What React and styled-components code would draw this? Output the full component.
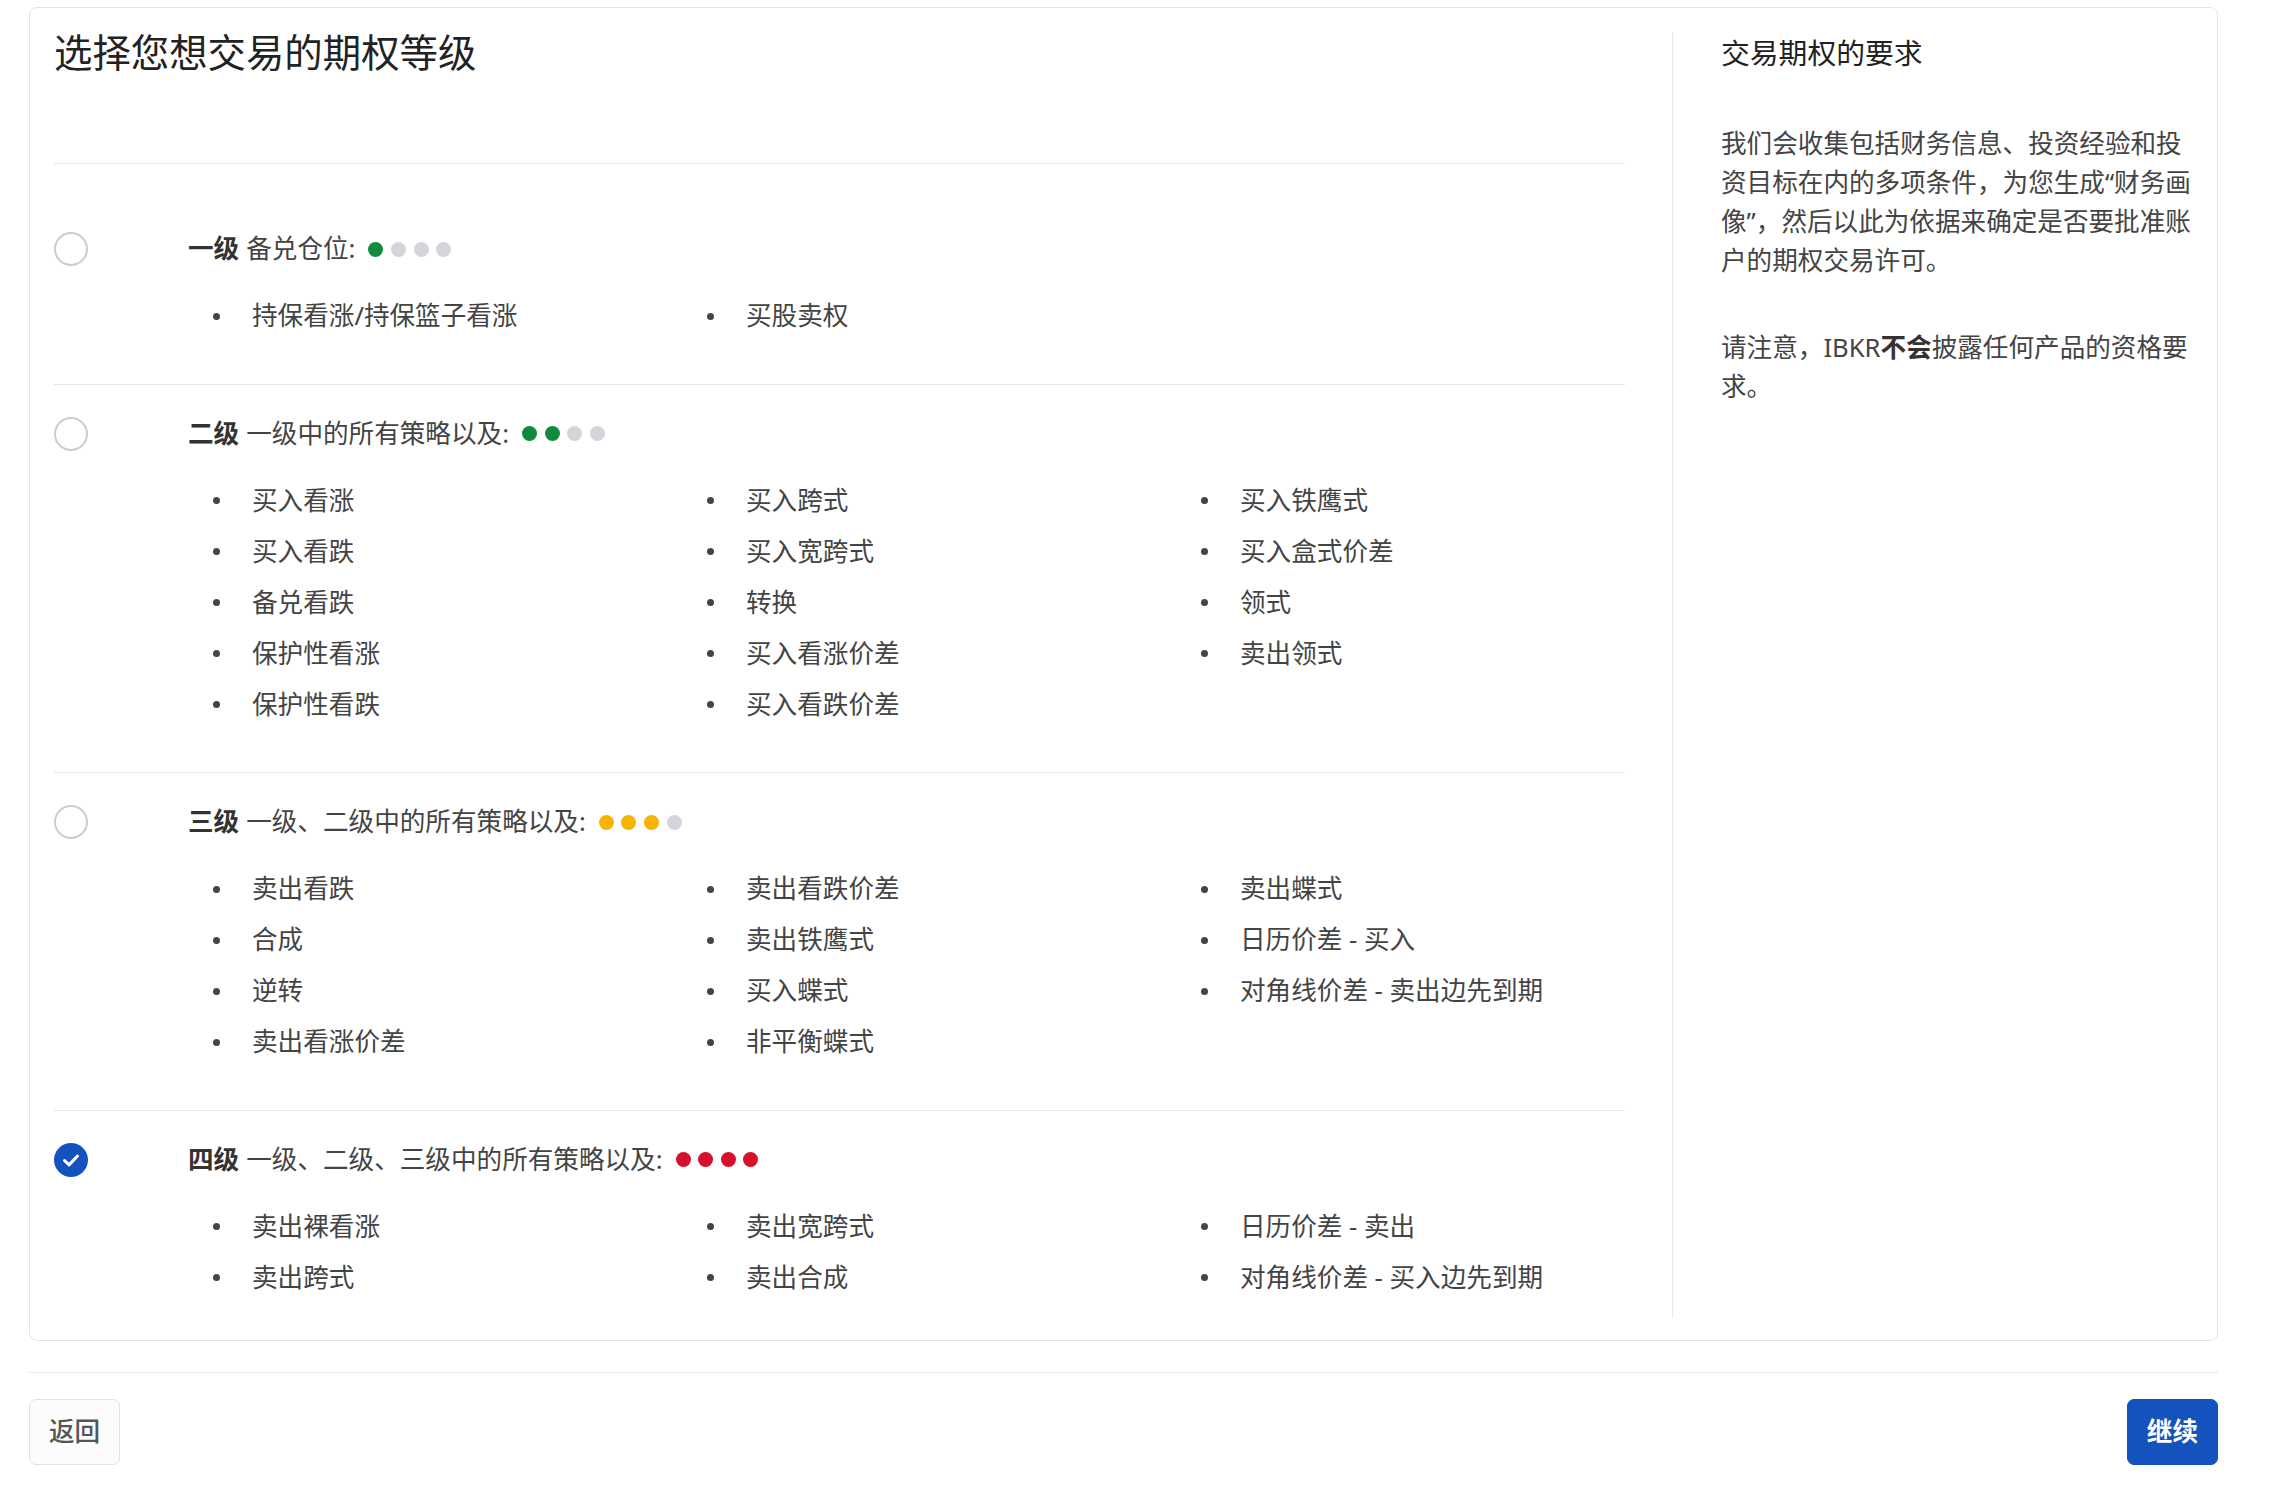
import styled, { createGlobalStyle } from "styled-components";

const GlobalStyle = createGlobalStyle`
  * { box-sizing: border-box; }
  body {
    margin: 0;
    background: #fff;
    font-family: "Noto Sans", "Noto Sans CJK SC", sans-serif;
    color: #333;
  }
`;

const Page = styled.div`
  padding: 7px 52px 0 29px;
`;

const Card = styled.div`
  border: 1px solid #e4e4e4;
  border-radius: 8px;
  padding: 24px 24px 22px 24px;
  display: grid;
  grid-template-columns: 1619px 1fr;
`;

const LeftCol = styled.div`
  padding-right: 47px;
  border-right: 1px solid #e8e8e8;
`;

const TitleBlock = styled.div`
  padding-bottom: 91px;
  border-bottom: 1px solid #e6e6e6;
`;

const Title = styled.h1`
  margin: 0;
  font-size: 38.4px;
  line-height: 40px;
  font-weight: 400;
  color: #222;
`;

const Levels = styled.div`
  padding-top: 36px;
`;

const Level = styled.div`
  display: grid;
  grid-template-columns: 134px 1fr;
  padding: 30px 0 ${(p) => (p.$last ? "8px" : "35.5px")};
  border-bottom: ${(p) => (p.$last ? "none" : "1px solid #e6e6e6")};
`;

const Radio = styled.span`
  width: 34px;
  height: 34px;
  margin-top: 2px;
  border-radius: 50%;
  border: ${(p) => (p.$checked ? "none" : "2px solid #cdcdcd")};
  background: ${(p) => (p.$checked ? "#1452bd" : "#fff")};
  display: flex;
  align-items: center;
  justify-content: center;
`;

const LevelHead = styled.div`
  display: flex;
  align-items: center;
  font-size: 25.6px;
  line-height: 38.4px;
  color: #444;

  & b {
    color: #333;
    font-weight: 700;
    margin-right: 7px;
  }
`;

const Dots = styled.span`
  display: inline-flex;
  gap: 7.6px;
  margin-left: 13px;
`;

const Dot = styled.span`
  width: 15px;
  height: 15px;
  border-radius: 50%;
  background: ${(p) => p.$color};
`;

const Items = styled.ul`
  list-style: none;
  margin: 28.6px 0 0;
  padding: 0;
  display: grid;
  grid-auto-flow: column;
  grid-template-columns: repeat(3, 494px);
  grid-template-rows: repeat(${(p) => p.$rows}, auto);
`;

const Item = styled.li`
  display: flex;
  align-items: center;
  font-size: 25.6px;
  line-height: 38.2px;
  margin-bottom: 12.8px;
  color: #444;
  white-space: nowrap;

  &::before {
    content: "";
    width: 7px;
    height: 7px;
    border-radius: 50%;
    background: #444;
    margin: 0 32px 0 25px;
    flex: none;
  }
`;

const RightCol = styled.div`
  padding-left: 48px;
  padding-right: 2px;
`;

const SideTitle = styled.h2`
  margin: 0;
  font-size: 28.8px;
  line-height: 41px;
  font-weight: 400;
  color: #222;
`;

const SideText = styled.p`
  margin: ${(p) => (p.$first ? "51px" : "48px")} 0 0;
  font-size: 25.6px;
  line-height: 39px;
  color: #444;

  & b {
    font-weight: 700;
    color: #333;
  }
`;

const Footer = styled.div`
  margin-top: 31px;
  border-top: 1px solid #e6e6e6;
  padding-top: 26px;
  display: flex;
  justify-content: space-between;
`;

const Button = styled.button`
  font-family: inherit;
  font-size: 25.6px;
  line-height: 38px;
  height: 66px;
  padding: 0 19px;
  border-radius: 7px;
  cursor: pointer;
  border: 1px solid ${(p) => (p.$primary ? "#1452bd" : "#e2e2e2")};
  background: ${(p) => (p.$primary ? "#1452bd" : "#fcfcfc")};
  color: ${(p) => (p.$primary ? "#fff" : "#555")};
  font-weight: ${(p) => (p.$primary ? 700 : 500)};
`;

const GRAY = "#d4d5da";
const GREEN = "#128a3d";
const YELLOW = "#f6b400";
const RED = "#d6102a";

const levels = [
  {
    name: "一级",
    desc: "备兑仓位:",
    dots: [GREEN, GRAY, GRAY, GRAY],
    items: ["持保看涨/持保篮子看涨", "买股卖权"],
  },
  {
    name: "二级",
    desc: "一级中的所有策略以及:",
    dots: [GREEN, GREEN, GRAY, GRAY],
    items: [
      "买入看涨",
      "买入看跌",
      "备兑看跌",
      "保护性看涨",
      "保护性看跌",
      "买入跨式",
      "买入宽跨式",
      "转换",
      "买入看涨价差",
      "买入看跌价差",
      "买入铁鹰式",
      "买入盒式价差",
      "领式",
      "卖出领式",
    ],
  },
  {
    name: "三级",
    desc: "一级、二级中的所有策略以及:",
    dots: [YELLOW, YELLOW, YELLOW, GRAY],
    items: [
      "卖出看跌",
      "合成",
      "逆转",
      "卖出看涨价差",
      "卖出看跌价差",
      "卖出铁鹰式",
      "买入蝶式",
      "非平衡蝶式",
      "卖出蝶式",
      "日历价差 - 买入",
      "对角线价差 - 卖出边先到期",
    ],
  },
  {
    name: "四级",
    desc: "一级、二级、三级中的所有策略以及:",
    dots: [RED, RED, RED, RED],
    checked: true,
    items: [
      "卖出裸看涨",
      "卖出跨式",
      "卖出宽跨式",
      "卖出合成",
      "日历价差 - 卖出",
      "对角线价差 - 买入边先到期",
    ],
  },
];

function Check() {
  return (
    <svg width="22" height="22" viewBox="0 0 22 22" fill="none">
      <path
        d="M4.5 11.5l4.6 4.4L17.5 7"
        stroke="#fff"
        strokeWidth="3"
        strokeLinecap="round"
        strokeLinejoin="round"
      />
    </svg>
  );
}

function App() {
  return (
    <Page>
      <GlobalStyle />
      <Card>
        <LeftCol>
          <TitleBlock>
            <Title>选择您想交易的期权等级</Title>
          </TitleBlock>
          <Levels>
            {levels.map((lv, i) => (
              <Level key={lv.name} $last={i === levels.length - 1}>
                <Radio $checked={lv.checked}>{lv.checked && <Check />}</Radio>
                <div>
                  <LevelHead>
                    <b>{lv.name}</b>
                    {lv.desc}
                    <Dots>
                      {lv.dots.map((c, j) => (
                        <Dot key={j} $color={c} />
                      ))}
                    </Dots>
                  </LevelHead>
                  <Items $rows={Math.ceil(lv.items.length / 3)}>
                    {lv.items.map((s) => (
                      <Item key={s}>{s}</Item>
                    ))}
                  </Items>
                </div>
              </Level>
            ))}
          </Levels>
        </LeftCol>
        <RightCol>
          <SideTitle>交易期权的要求</SideTitle>
          <SideText $first>
            我们会收集包括财务信息、投资经验和投资目标在内的多项条件，为您生成“财务画像”，然后以此为依据来确定是否要批准账户的期权交易许可。
          </SideText>
          <SideText>
            请注意，IBKR<b>不会</b>披露任何产品的资格要求。
          </SideText>
        </RightCol>
      </Card>
      <Footer>
        <Button>返回</Button>
        <Button $primary>继续</Button>
      </Footer>
    </Page>
  );
}

export default App;
